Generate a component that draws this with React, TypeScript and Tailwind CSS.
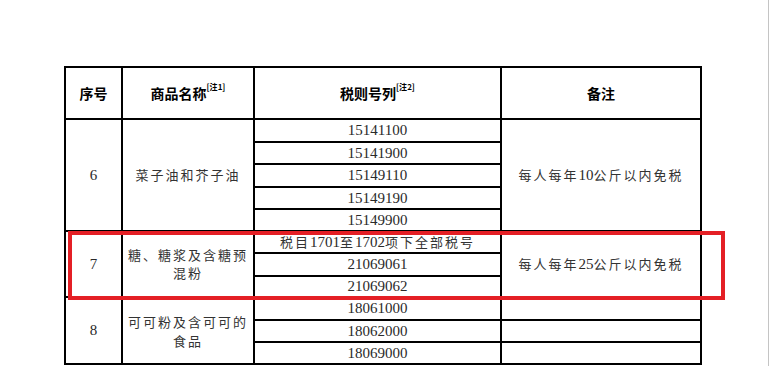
import * as React from 'react';

const body = "font-['Liberation_Serif','Noto_Sans_CJK_SC',serif] text-[15px] text-[#2a2a2a]";
const cjk = "font-['Noto_Sans_CJK_SC',sans-serif] text-[13px] tracking-[2px] text-[#333]";
const td = 'border-2 border-black p-0 text-center align-middle';

function Sup({ n }: { n: number }) {
  return <span className="align-text-top text-[8px] font-bold leading-none">[注{n}]</span>;
}

function CodeRow({ code, h, children, after }: { code: string; h: number; children?: React.ReactNode; after?: React.ReactNode }) {
  return (
    <tr style={{ height: h }}>
      {children}
      <td className={`${td} ${body} leading-none`}>{code}</td>
      {after}
    </tr>
  );
}

export default function App() {
  return (
    <div className="relative h-[366px] w-[769px] overflow-hidden border-r border-[#c4c4c4] bg-white">
      <div className="pl-[64px] pt-[66px]">
        <table className="table-fixed border-collapse">
          <colgroup>
            <col className="w-[57px]" />
            <col className="w-[132px]" />
            <col className="w-[247px]" />
            <col className="w-[200px]" />
          </colgroup>
          <thead>
            <tr className="h-[52px] font-['Noto_Sans_CJK_SC',sans-serif] text-[14px] font-bold text-black">
              <th className={td}>序号</th>
              <th className={td}>
                商品名称<Sup n={1} />
              </th>
              <th className={td}>
                税则号列<Sup n={2} />
              </th>
              <th className={td}>备注</th>
            </tr>
          </thead>
          <tbody>
            <CodeRow
              code="15141100"
              h={23}
              after={
                <td rowSpan={5} className={`${td} ${cjk}`}>
                  每人每年<span className={`${body} tracking-normal`}>10</span>公斤以内免税
                </td>
              }
            >
              <td rowSpan={5} className={`${td} ${body}`}>6</td>
              <td rowSpan={5} className={`${td} ${cjk}`}>菜子油和芥子油</td>
            </CodeRow>
            <CodeRow code="15141900" h={22} />
            <CodeRow code="15149110" h={23} />
            <CodeRow code="15149190" h={22} />
            <CodeRow code="15149900" h={22} />

            <tr style={{ height: 22 }}>
              <td rowSpan={3} className={`${td} ${body}`}>7</td>
              <td rowSpan={3} className={`${td} ${cjk} px-[4px] leading-[18px]`}>
                糖、糖浆及含糖预
                <br />
                混粉
              </td>
              <td className={`${td} ${cjk} leading-none`}>
                税目<span className={`${body} tracking-normal`}>1701</span>至
                <span className={`${body} tracking-normal`}>1702</span>项下全部税号
              </td>
              <td rowSpan={3} className={`${td} ${cjk}`}>
                每人每年<span className={`${body} tracking-normal`}>25</span>公斤以内免税
              </td>
            </tr>
            <CodeRow code="21069061" h={23} />
            <CodeRow code="21069062" h={21} />

            <tr style={{ height: 23 }}>
              <td rowSpan={3} className={`${td} ${body}`}>8</td>
              <td rowSpan={3} className={`${td} ${cjk} px-[4px] leading-[19px]`}>
                可可粉及含可可的
                <br />
                食品
              </td>
              <td className={`${td} ${body} leading-none`}>18061000</td>
              <td className={td}></td>
            </tr>
            <tr style={{ height: 22 }}>
              <td className={`${td} ${body} leading-none`}>18062000</td>
              <td className={td}></td>
            </tr>
            <tr style={{ height: 22 }}>
              <td className={`${td} ${body} leading-none`}>18069000</td>
              <td className={td}></td>
            </tr>
          </tbody>
        </table>
      </div>

      {/* highlight box drawn over row 7 */}
      <div className="pointer-events-none absolute left-[68px] top-[231px] h-[69px] w-[657px] border-4 border-[#e41f25]" />
    </div>
  );
}
